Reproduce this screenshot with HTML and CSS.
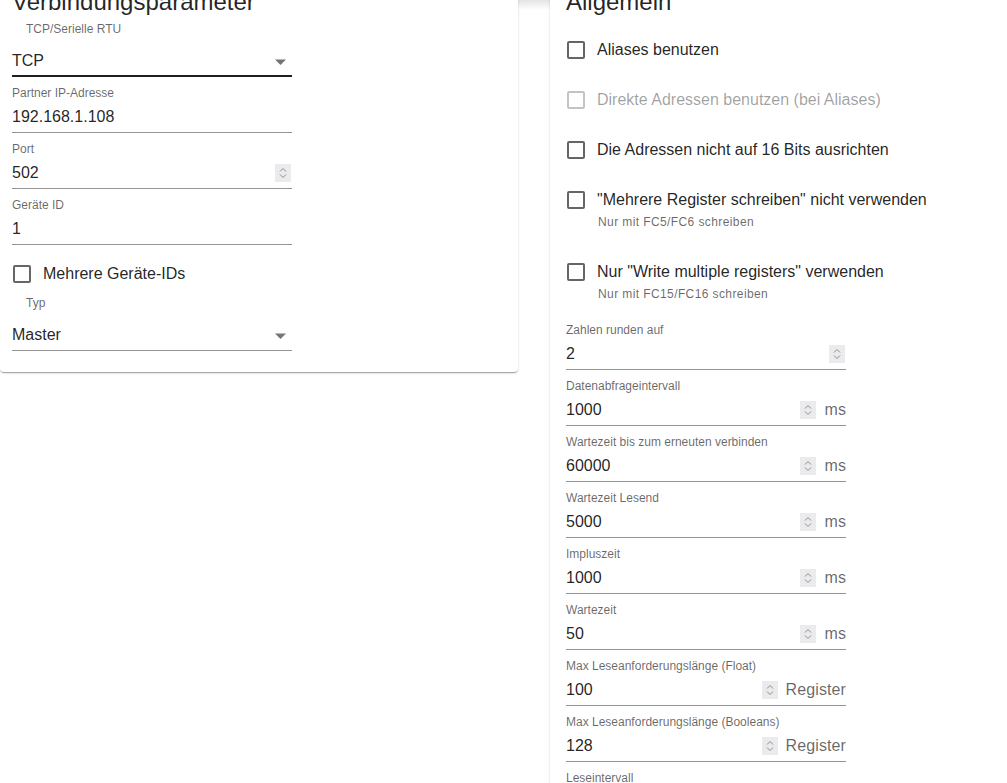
FILE: index.html
```html
<!DOCTYPE html>
<html lang="de">
<head>
<meta charset="utf-8">
<title>Verbindungsparameter</title>
<link rel="stylesheet" href="styles.css">
</head>
<body>
<div class="page">
  <section class="card card-left">
    <h2 class="heading">Verbindungsparameter</h2>
    <div class="form">
      <div class="select-block">
        <div class="select-label">TCP/Serielle RTU</div>
        <div class="select-row focused">
          <span class="field-value">TCP</span>
          <svg class="arrow" width="11" height="6" viewBox="0 0 11 6"><path d="M0 0.5h11L5.5 6z" fill="#757575"/></svg>
        </div>
      </div>
      <div class="field">
        <div class="field-label">Partner IP-Adresse</div>
        <div class="field-row"><span class="field-value">192.168.1.108</span></div>
      </div>
      <div class="field">
        <div class="field-label">Port</div>
        <div class="field-row"><span class="field-value">502</span><span class="spin"><svg width="16" height="18" viewBox="0 0 16 18"><path d="M5 7.5l3-3 3 3M5 10.5l3 3 3-3" fill="none" stroke="#8c8c8c" stroke-width="1"/></svg></span></div>
      </div>
      <div class="field">
        <div class="field-label">Geräte ID</div>
        <div class="field-row"><span class="field-value">1</span></div>
      </div>
      <div class="check"><span class="box"></span><span class="check-text">Mehrere Geräte-IDs</span></div>
      <div class="select-block last">
        <div class="select-label">Typ</div>
        <div class="select-row">
          <span class="field-value">Master</span>
          <svg class="arrow" width="11" height="6" viewBox="0 0 11 6"><path d="M0 0.5h11L5.5 6z" fill="#757575"/></svg>
        </div>
      </div>
    </div>
  </section>

  <section class="card card-right">
    <h2 class="heading">Allgemein</h2>
    <div class="checks">
      <div class="check-block"><div class="check"><span class="box"></span><span class="check-text">Aliases benutzen</span></div></div>
      <div class="check-block"><div class="check disabled"><span class="box"></span><span class="check-text">Direkte Adressen benutzen (bei Aliases)</span></div></div>
      <div class="check-block"><div class="check"><span class="box"></span><span class="check-text">Die Adressen nicht auf 16 Bits ausrichten</span></div></div>
      <div class="check-block"><div class="check"><span class="box"></span><span class="check-text">"Mehrere Register schreiben" nicht verwenden</span></div><div class="helper">Nur mit FC5/FC6 schreiben</div></div>
      <div class="check-block"><div class="check"><span class="box"></span><span class="check-text">Nur "Write multiple registers" verwenden</span></div><div class="helper">Nur mit FC15/FC16 schreiben</div></div>
    </div>
    <div class="fields">
      <div class="field">
        <div class="field-label">Zahlen runden auf</div>
        <div class="field-row"><span class="field-value">2</span><span class="spin"><svg width="16" height="18" viewBox="0 0 16 18"><path d="M5 7.5l3-3 3 3M5 10.5l3 3 3-3" fill="none" stroke="#8c8c8c" stroke-width="1"/></svg></span></div>
      </div>
      <div class="field">
        <div class="field-label">Datenabfrageintervall</div>
        <div class="field-row"><span class="field-value">1000</span><span class="spin"><svg width="16" height="18" viewBox="0 0 16 18"><path d="M5 7.5l3-3 3 3M5 10.5l3 3 3-3" fill="none" stroke="#8c8c8c" stroke-width="1"/></svg></span><span class="unit">ms</span></div>
      </div>
      <div class="field">
        <div class="field-label">Wartezeit bis zum erneuten verbinden</div>
        <div class="field-row"><span class="field-value">60000</span><span class="spin"><svg width="16" height="18" viewBox="0 0 16 18"><path d="M5 7.5l3-3 3 3M5 10.5l3 3 3-3" fill="none" stroke="#8c8c8c" stroke-width="1"/></svg></span><span class="unit">ms</span></div>
      </div>
      <div class="field">
        <div class="field-label">Wartezeit Lesend</div>
        <div class="field-row"><span class="field-value">5000</span><span class="spin"><svg width="16" height="18" viewBox="0 0 16 18"><path d="M5 7.5l3-3 3 3M5 10.5l3 3 3-3" fill="none" stroke="#8c8c8c" stroke-width="1"/></svg></span><span class="unit">ms</span></div>
      </div>
      <div class="field">
        <div class="field-label">Impluszeit</div>
        <div class="field-row"><span class="field-value">1000</span><span class="spin"><svg width="16" height="18" viewBox="0 0 16 18"><path d="M5 7.5l3-3 3 3M5 10.5l3 3 3-3" fill="none" stroke="#8c8c8c" stroke-width="1"/></svg></span><span class="unit">ms</span></div>
      </div>
      <div class="field">
        <div class="field-label">Wartezeit</div>
        <div class="field-row"><span class="field-value">50</span><span class="spin"><svg width="16" height="18" viewBox="0 0 16 18"><path d="M5 7.5l3-3 3 3M5 10.5l3 3 3-3" fill="none" stroke="#8c8c8c" stroke-width="1"/></svg></span><span class="unit">ms</span></div>
      </div>
      <div class="field">
        <div class="field-label">Max Leseanforderungslänge (Float)</div>
        <div class="field-row"><span class="field-value">100</span><span class="spin"><svg width="16" height="18" viewBox="0 0 16 18"><path d="M5 7.5l3-3 3 3M5 10.5l3 3 3-3" fill="none" stroke="#8c8c8c" stroke-width="1"/></svg></span><span class="unit">Register</span></div>
      </div>
      <div class="field">
        <div class="field-label">Max Leseanforderungslänge (Booleans)</div>
        <div class="field-row"><span class="field-value">128</span><span class="spin"><svg width="16" height="18" viewBox="0 0 16 18"><path d="M5 7.5l3-3 3 3M5 10.5l3 3 3-3" fill="none" stroke="#8c8c8c" stroke-width="1"/></svg></span><span class="unit">Register</span></div>
      </div>
      <div class="field">
        <div class="field-label">Leseintervall</div>
        <div class="field-row"><span class="field-value">0</span><span class="spin"><svg width="16" height="18" viewBox="0 0 16 18"><path d="M5 7.5l3-3 3 3M5 10.5l3 3 3-3" fill="none" stroke="#8c8c8c" stroke-width="1"/></svg></span><span class="unit">ms</span></div>
      </div>
    </div>
  </section>
</div>
</body>
</html>
```

FILE: styles.css
```css
html, body {
  height: 100%;
}
body {
  margin: 0;
  overflow: hidden;
  font-family: "Liberation Sans", Arial, sans-serif;
  color: rgba(0, 0, 0, 0.87);
  background: linear-gradient(#e4e4e4, #ffffff 10px) no-repeat, #ffffff;
}
.page {
  display: flex;
  align-items: flex-start;
  gap: 32px;
  margin-top: -29px;
}
.card {
  background: #fff;
  border-radius: 4px;
  box-shadow: 0 2px 1px -1px rgba(0,0,0,0.2), 0 1px 1px 0 rgba(0,0,0,0.14), 0 1px 3px 0 rgba(0,0,0,0.12);
  box-sizing: border-box;
}
.card-left {
  flex: none;
  width: 518px;
  padding: 16px 12px 21px;
}
.card-right {
  flex: 1;
  min-height: 1000px;
  padding: 16px 16px;
}
.heading {
  margin: 0;
  font-size: 24px;
  line-height: 29px;
  font-weight: 400;
}
.form {
  margin-top: 5px;
  display: flex;
  flex-direction: column;
}
.select-block {
  width: 280px;
  margin-bottom: 8px;
}
.select-block.last {
  margin-bottom: 0;
}
.select-label {
  margin-left: 14px;
  font-size: 12px;
  line-height: 16px;
  height: 16px;
  color: rgba(0, 0, 0, 0.6);
}
.select-row {
  position: relative;
  display: flex;
  align-items: center;
  height: 30px;
  padding-top: 9px;
  border-bottom: 1px solid #949494;
}
.select-row.focused::after {
  content: "";
  position: absolute;
  left: 0;
  right: 0;
  bottom: -1px;
  height: 2px;
  background: #1f1f1f;
}
.arrow {
  margin-right: 6px;
  margin-top: 1px;
}
.field {
  width: 280px;
  margin-bottom: 8px;
}
.field-label {
  font-size: 12px;
  line-height: 16px;
  height: 16px;
  color: rgba(0, 0, 0, 0.6);
  white-space: nowrap;
}
.field-row {
  display: flex;
  align-items: center;
  height: 30px;
  padding-top: 1px;
  border-bottom: 1px solid #949494;
}
.field-value {
  flex: 1;
  font-size: 16px;
  line-height: 20px;
}
.spin {
  display: flex;
  width: 16px;
  height: 18px;
  margin-right: 1px;
  background: #ebebee;
}
.unit {
  margin-left: 7px;
  font-size: 16px;
  line-height: 20px;
  letter-spacing: 0.1px;
  color: rgba(0, 0, 0, 0.6);
}
.check {
  display: flex;
  align-items: center;
  height: 42px;
}
.box {
  box-sizing: border-box;
  width: 18px;
  height: 18px;
  margin-left: 1px;
  margin-right: 12px;
  border: 2px solid #666;
  border-radius: 2px;
}
.check-text {
  font-size: 16px;
  line-height: 20px;
  white-space: nowrap;
}
.check.disabled .box {
  border-color: #c4c4c4;
}
.check.disabled .check-text {
  color: rgba(0, 0, 0, 0.38);
}
.checks {
  margin-top: 13px;
}
.check-block {
  display: flex;
  flex-direction: column;
  margin-bottom: 8px;
}
.helper {
  margin: -7px 0 13px 32px;
  font-size: 12px;
  line-height: 16px;
  letter-spacing: 0.4px;
  color: rgba(0, 0, 0, 0.6);
}
.fields {
  margin-top: -1px;
}
```
